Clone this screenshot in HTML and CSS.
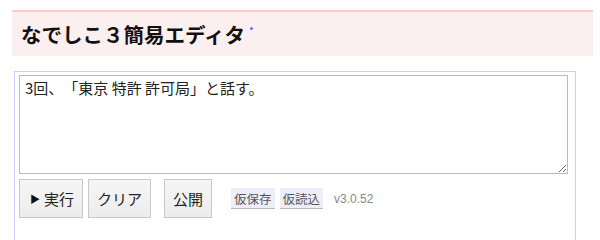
FILE: index.html
```html
<!DOCTYPE html>
<html lang="ja">
<head>
<meta charset="utf-8">
<title>なでしこ3簡易エディタ</title>
<link rel="stylesheet" href="styles.css">
</head>
<body>
<div class="header">
  <h1 class="title">なでしこ３簡易エディタ<span class="dot"></span></h1>
</div>
<div class="box">
  <textarea class="editor">3回、「東京 特許 許可局」と話す。</textarea>
  <div class="controls">
    <button class="btn btn-run"><span class="tri">▶</span>実行</button>
    <button class="btn">クリア</button>
    <button class="btn btn-pub">公開</button>
    <button class="mini">仮保存</button>
    <button class="mini">仮読込</button>
    <span class="ver">v3.0.52</span>
  </div>
</div>
</body>
</html>
```
FILE: styles.css
```css
html, body {
  margin: 0;
  background: #fff;
}
body {
  padding: 10px 7px 0 12px;
  font-family: "Noto Sans CJK JP", "Liberation Sans", sans-serif;
  color: #222;
  text-spacing-trim: space-all;
}
.header {
  border-top: 2px solid #f9cccc;
  background: #fcefef;
  height: 44px;
  display: flex;
  align-items: center;
  padding-left: 9px;
}
.title {
  margin: 0;
  font-size: 20.5px;
  font-weight: bold;
  color: #111;
  line-height: 1;
  display: flex;
  align-items: flex-start;
}
.dot {
  width: 3px;
  height: 3px;
  background: #6a6aff;
  border-radius: 50%;
  margin-left: 5px;
  margin-top: 3px;
}
.box {
  margin: 15px 0 0 2px;
  width: 552px;
  height: 170px;
  border: 1px solid #ccccff;
  border-bottom: none;
  padding: 3px 4px 0 4px;
}
.editor {
  display: block;
  box-sizing: border-box;
  width: 549px;
  height: 99px;
  margin: 0;
  border: 1px solid #bbb;
  padding: 1px 5px;
  font-family: "Noto Sans CJK JP", "Liberation Sans", sans-serif;
  font-size: 15px;
  line-height: 1.4;
  color: #222;
  resize: vertical;
  text-spacing-trim: space-all;
}
.controls {
  display: flex;
  align-items: center;
  margin-top: 5px;
}
.btn {
  box-sizing: border-box;
  height: 39px;
  padding: 0 8px;
  margin: 0 5px 0 0;
  border: 1px solid #c8c8c8;
  border-radius: 0;
  background: linear-gradient(#f6f6f6, #ececec);
  font-family: "Noto Sans CJK JP", "Liberation Sans", sans-serif;
  font-size: 15px;
  color: #222;
  display: flex;
  align-items: center;
}
.btn-run {
  padding: 0 8px 0 10px;
}
.tri {
  font-size: 10px;
  margin-right: 4px;
  color: #111;
}
.btn-pub {
  margin-left: 8px;
  margin-right: 19px;
  padding: 0 8px;
}
.mini {
  box-sizing: border-box;
  height: 21px;
  padding: 0 3px;
  margin-right: 5px;
  border: none;
  border-bottom: 1px solid #bbb;
  border-radius: 0;
  background: #eeeefa;
  font-family: "Noto Sans CJK JP", "Liberation Sans", sans-serif;
  font-size: 12.5px;
  color: #555;
}
.ver {
  margin-left: 6px;
  font-family: "Liberation Sans", sans-serif;
  font-size: 12px;
  color: #888;
}
```
